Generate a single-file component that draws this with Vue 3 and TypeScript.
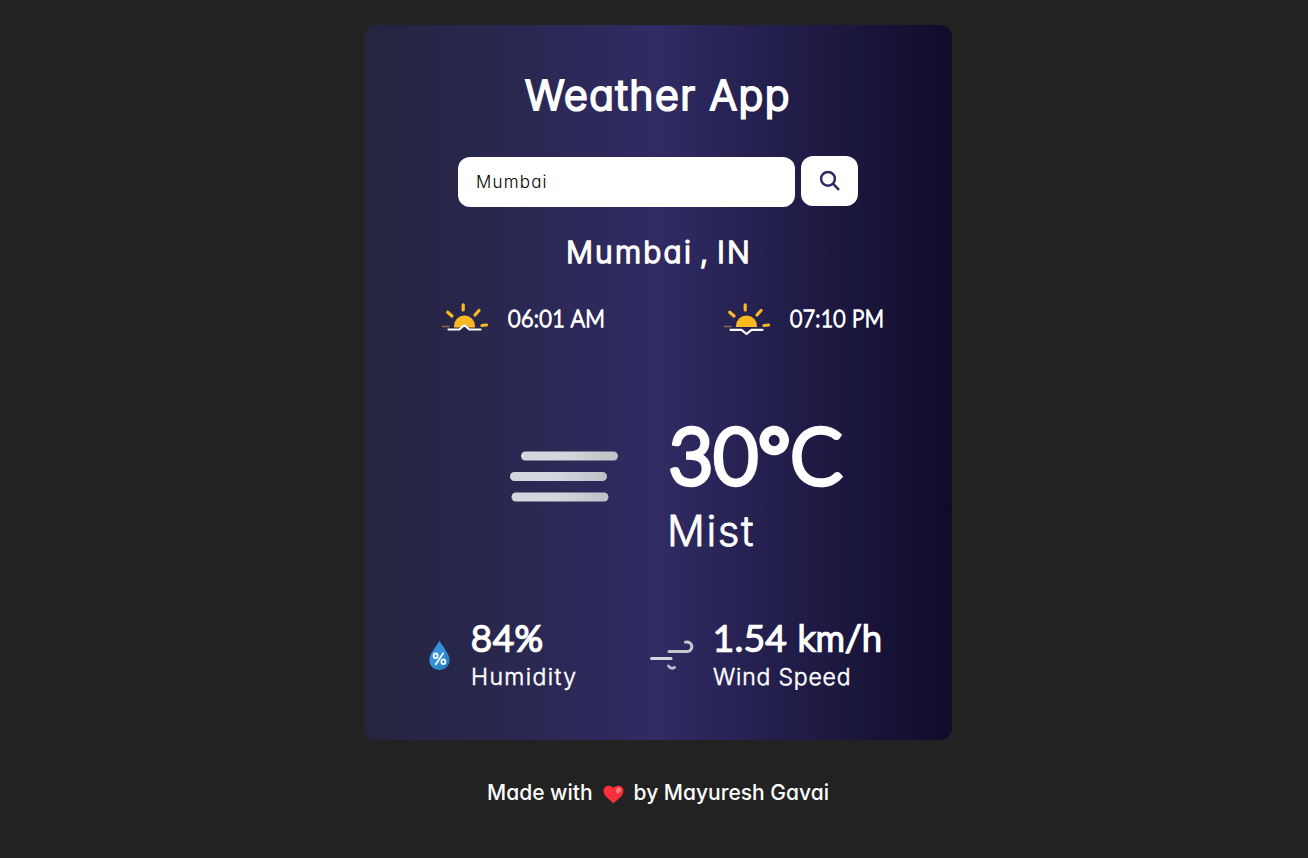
<script setup lang="ts">
import { ref } from 'vue'

const city = ref('Mumbai')
</script>

<template>
  <div class="page">
    <main class="card">
      <h1>Weather App</h1>
      <form class="search" @submit.prevent>
        <input v-model="city" type="text" aria-label="City" />
        <button type="submit" aria-label="Search">
          <svg width="22" height="22" viewBox="0 0 22 22" fill="none" stroke="#302b63" stroke-width="2.5">
            <circle cx="9" cy="8.8" r="6.9" />
            <path d="M13.9 13.7L20 19.8" />
          </svg>
        </button>
      </form>
      <h2>Mumbai , IN</h2>
      <section class="sun">
        <div class="sun-item">
          <svg width="48" height="34" viewBox="0 0 48 34" fill="none">
            <g stroke="#fbb91f" stroke-width="3.2" stroke-linecap="round">
              <path d="M22.200 2.800V8M6.700 10.200L11 14M38 8.500L34 13M41 23.500L45.500 23" />
              <path d="M1.500 24.500H8" stroke="#8a6a3c" stroke-width="1.500" />
            </g>
            <path d="M13 25.500V24A10.500 10.500 0 0 1 34 24V25.500H27.500L23.300 21.500L19.500 25.500Z" fill="#fbb91f" />
            <path d="M7.500 27.500H18.300L23.300 23L28.300 27.500H39.500" stroke="#fff" stroke-width="2.200" stroke-linecap="round" stroke-linejoin="round" />
          </svg>
          <span class="time">06:01 AM</span>
        </div>
        <div class="sun-item">
          <svg width="48" height="34" viewBox="0 0 48 34" fill="none">
            <g stroke="#fbb91f" stroke-width="3.2" stroke-linecap="round">
              <path d="M22.200 2.800V8M6.700 10.200L11 14M38 8.500L34 13M41 23.500L45.500 23" />
              <path d="M1.500 24.500H8" stroke="#8a6a3c" stroke-width="1.500" />
            </g>
            <path d="M13 25V24A10.500 10.500 0 0 1 34 24V25Z" fill="#fbb91f" />
            <path d="M7.500 27.800H18.500L23.500 32L28.500 27.800H39.500" stroke="#fff" stroke-width="2.200" stroke-linecap="round" stroke-linejoin="round" />
          </svg>
          <span class="time pm">07:10 PM</span>
        </div>
      </section>
      <section class="now">
        <svg width="108" height="52" viewBox="0 0 108 52">
          <defs>
            <linearGradient id="mist" x1="0" y1="0" x2="1" y2="0">
              <stop offset="0" stop-color="#d4d7dd" />
              <stop offset=".45" stop-color="#d4d7dd" />
              <stop offset="1" stop-color="#bec1c6" />
            </linearGradient>
          </defs>
          <g fill="url(#mist)">
            <rect x="11" y="0.500" width="97" height="9" rx="4.500" />
            <rect x="0" y="21" width="97" height="9" rx="4.500" />
            <rect x="1.500" y="41.500" width="97" height="9" rx="4.500" />
          </g>
        </svg>
        <div>
          <div class="temp">30<span class="degree">°</span>C</div>
          <div class="desc">Mist</div>
        </div>
      </section>
      <section class="stats">
        <div class="stat hum">
          <svg width="21" height="31" viewBox="0 0 21 31">
            <defs>
              <linearGradient id="drop" x1="0" y1="0" x2="1" y2="1">
                <stop offset="0" stop-color="#3392dc" />
                <stop offset=".5" stop-color="#3392dc" />
                <stop offset="1" stop-color="#2271b1" />
              </linearGradient>
            </defs>
            <path d="M10.500 0.500C8 6 0.300 13.500 0.300 20A10.200 10.200 0 0 0 20.700 20C20.700 13.500 13 6 10.500 0.500Z" fill="url(#drop)" />
            <g fill="none" stroke="#fff" stroke-width="1.700">
              <ellipse cx="6.600" cy="15.800" rx="2" ry="2.400" />
              <ellipse cx="14.400" cy="21.800" rx="2" ry="2.400" />
              <path d="M14.200 13.300L6.800 24.300" stroke-linecap="round" />
            </g>
          </svg>
          <div>
            <div class="value">84%</div>
            <div class="label">Humidity</div>
          </div>
        </div>
        <div class="stat wind">
          <svg width="44" height="32" viewBox="0 0 44 32" fill="none" stroke="#d4d7dd" stroke-width="3" stroke-linecap="round">
            <path d="M1.500 18.500H21" />
            <path d="M19 11.500H36.500A4.800 4.800 0 1 0 35.500 2.200" stroke="#c5c8cf" />
            <path d="M18.500 26Q21 29.500 24.500 27.500" stroke="#b9bcc6" />
          </svg>
          <div>
            <div class="value">1.54 km/h</div>
            <div class="label">Wind Speed</div>
          </div>
        </div>
      </section>
    </main>
    <footer>
      <span>Made with</span>
      <svg width="21" height="19" viewBox="0 0 21 19">
        <path d="M10.500 18.500C7 15 0.500 11 0.500 5.800C0.500 0.300 7.500-1 10.500 3C13.500-1 20.500 0.300 20.500 5.800C20.500 11 14 15 10.500 18.500Z" fill="#f92f3c" />
        <ellipse cx="15.500" cy="5.500" rx="2.300" ry="3" transform="rotate(30 15.500 5.500)" fill="#f97c7c" />
      </svg>
      <span>by Mayuresh Gavai</span>
    </footer>
  </div>
</template>

<style>
body { background: #222; }
</style>

<style scoped>
.page {
  box-sizing: border-box;
  height: 858px;
  padding-top: 25px;
  overflow: hidden;
  color: #fff;
  font-family: Inter, "Liberation Sans", sans-serif;
  font-feature-settings: "cv11";
  white-space: nowrap;
  stroke-linejoin: round;
}
.card {
  box-sizing: border-box;
  width: 588px;
  height: 715px;
  margin-left: 364px;
  padding-top: 45px;
  border-radius: 12px;
  background: linear-gradient(to right, #24243e, #302b63, #0f0c29);
}
h1, h2 { margin: 0; text-align: center; }
h1 { font-size: 41px; line-height: 51px; font-weight: 300; letter-spacing: 1.5px; -webkit-text-stroke: 2.2px #fff; }
.search { display: flex; gap: 6px; margin: 35px 0 0 94px; }
input {
  box-sizing: border-box;
  width: 337px;
  height: 50px;
  margin-top: 1px;
  padding: 0 18px;
  border: 0;
  border-radius: 12px;
  background: #fff;
  color: #000;
  font: 300 17px Inter, sans-serif;
  font-feature-settings: "cv11";
  letter-spacing: 1.2px;
}
button {
  width: 57px;
  height: 50px;
  padding: 0;
  border: 0;
  border-radius: 12px;
  background: #fff;
}
button svg { display: block; margin: 0 auto; }
h2 { margin-top: 25px; padding-left: 2px; font-size: 30px; line-height: 41px; font-weight: 300; letter-spacing: 2.2px; word-spacing: -4px; -webkit-text-stroke: 1.5px #fff; }
.sun { display: flex; margin: 29px 0 0 77px; }
.sun-item { display: flex; flex: none; gap: 19px; width: 282px; height: 34px; }
.time {
  font: 300 23.5px/33px Lato, sans-serif;
  letter-spacing: 0.4px;
  -webkit-text-stroke: 1.4px #fff;
  transform: scaleX(0.92);
  transform-origin: left;
}
.pm { transform: scaleX(0.9); }
.now { display: flex; align-items: flex-start; gap: 50px; margin: 68px 0 0 146px; }
.now svg { margin-top: 47px; }
.temp {
  padding-left: 1px;
  font: 300 76px/101px Lato, sans-serif;
  letter-spacing: 0.6px;
  -webkit-text-stroke: 5.5px #fff;
}
.degree { -webkit-text-stroke: 6.5px #fff; }
.desc { margin: 0 0 0 -1px; font-size: 42px; line-height: 51px; font-weight: 300; letter-spacing: 1.6px; -webkit-text-stroke: 0.8px #fff; }
.stats { display: flex; margin: 58px 0 0 65px; }
.stat { display: flex; gap: 21px; }
.stat svg { margin-top: 26px; }
.hum { width: 221px; }
.wind { gap: 20px; }
.value { font: 300 36px/46px Lato, sans-serif; letter-spacing: 1px; -webkit-text-stroke: 2.5px #fff; }
.wind .value { margin-left: -1px; letter-spacing: 0.8px; }
.label { margin-top: 2px; font-size: 23px; line-height: 30px; font-weight: 300; letter-spacing: 1.4px; -webkit-text-stroke: 0.5px #fff; }
.wind .label { margin-left: -1px; letter-spacing: 0.8px; }
footer { display: flex; justify-content: center; gap: 10px; margin-top: 38px; padding-left: 8px; font-size: 21px; line-height: 30px; font-weight: 500; }
footer svg { margin-top: 7px; }
</style>
